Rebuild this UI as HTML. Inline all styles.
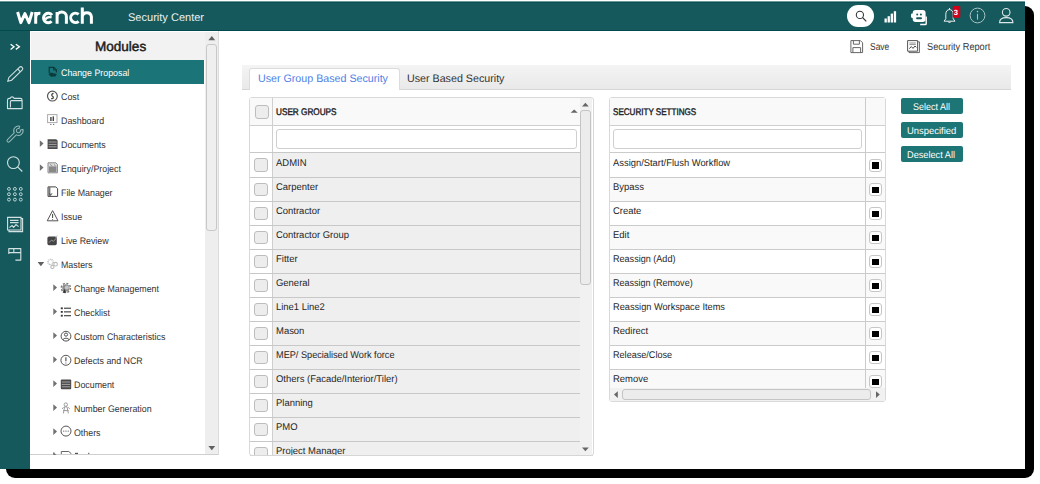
<!DOCTYPE html><html><head><meta charset='utf-8'><style>
*{box-sizing:border-box;margin:0;padding:0}
html,body{width:1040px;height:484px;overflow:hidden;background:#fff;font-family:"Liberation Sans",sans-serif;position:relative}
.a{position:absolute}
.t{position:absolute;white-space:nowrap;line-height:1;text-rendering:geometricPrecision}
svg{position:absolute;overflow:visible}
</style></head><body>
<div class="a" style="left:6px;top:6px;width:1028px;height:472px;background:#000;border-radius:9px"></div>
<div class="a" style="left:0px;top:0px;width:1025px;height:469px;background:#fff"></div>
<div class="a" style="left:0px;top:1px;width:1025px;height:30px;background:#16595d;border-top:1px solid #6f9a9c;border-bottom:1px solid #00494d"></div>
<div class="a" style="left:0px;top:2px;width:1025px;height:1px;background:#0a4e52"></div>
<svg style="left:0;top:0" width="1040" height="484" viewBox="0 0 1040 484"><path d="M17.6 12 L20.8 22.6 L24.9 13.6 L29 22.6 L32.2 12" fill="none" stroke="#fff" stroke-width="3" stroke-linejoin="round"/><path d="M35.7 23.8 V12 M35.7 17.6 C35.9 14.2 37.6 13 40.4 13.2" fill="none" stroke="#fff" stroke-width="3"/><path d="M52 15.2 A4.7 4.7 0 1 0 51.6 21.3" fill="none" stroke="#fff" stroke-width="3"/><path d="M45.2 19.6 C46.4 17.6 48.6 16.6 51.6 17.4" fill="none" stroke="#fff" stroke-width="2.4"/><path d="M57.1 23.8 V12 M57.1 16.6 A4.6 4.6 0 0 1 66.4 16.6 V23.8" fill="none" stroke="#fff" stroke-width="3"/><path d="M78.6 14.4 A4.7 4.7 0 1 0 78.6 21.3" fill="none" stroke="#fff" stroke-width="3"/><path d="M82.3 23.8 V7.6 M82.3 16.6 A4.6 4.6 0 0 1 91.4 16.6 V23.8" fill="none" stroke="#fff" stroke-width="3"/></svg>
<div class="t" id="T0" style="left:127.70px;top:13px;font-size:11.2px;color:#e8f0f0;font-weight:normal;transform:scaleX(0.9861);transform-origin:0 0;">Security Center</div>
<div class="a" style="left:847px;top:5px;width:27px;height:22px;background:#fff;border-radius:11px"></div>
<svg style="left:0;top:0" width="1040" height="484" viewBox="0 0 1040 484"><circle cx="859.9" cy="14.9" r="3.6" fill="none" stroke="#333" stroke-width="1.05"/><line x1="862.5" y1="17.5" x2="866.3" y2="21.3" stroke="#333" stroke-width="1.1"/><rect x="884.5" y="18.5" width="2.3" height="4" fill="#fff"/><rect x="887.6" y="16.2" width="2.3" height="6.3" fill="#fff"/><rect x="890.7" y="13.6" width="2.3" height="8.9" fill="#fff"/><rect x="893.8" y="11.2" width="2.3" height="11.3" fill="#fff"/><rect x="912.7" y="10" width="12.9" height="12.1" rx="3" fill="#fff"/><rect x="911" y="13.4" width="2.6" height="4.5" rx="1.1" fill="#fff"/><circle cx="917.2" cy="14.5" r="1" fill="#16595d"/><circle cx="920.9" cy="14.5" r="1" fill="#16595d"/><rect x="916.1" y="17.3" width="5.9" height="1.9" rx="0.9" fill="#16595d"/><path d="M920.2 24.5 H925.4 Q926.2 24.5 926.2 23.7 V16.4" fill="none" stroke="#fff" stroke-width="1.4"/><path d="M944 21.2 H955 L953.2 18.8 V14.2 C953.2 11.2 951.5 9.6 949.5 9.6 C947.5 9.6 945.8 11.2 945.8 14.2 V18.8 Z" fill="none" stroke="#e6eeee" stroke-width="1"/><path d="M948 21.5 A1.6 1.6 0 0 0 951 21.5" fill="none" stroke="#e6eeee" stroke-width="1"/><line x1="949.5" y1="8" x2="949.5" y2="9.6" stroke="#e6eeee" stroke-width="1"/><rect x="952.8" y="6" width="7.5" height="11.8" rx="1" fill="#d4001a"/><circle cx="977.5" cy="15.5" r="7.4" fill="none" stroke="#a9c2c3" stroke-width="1"/><circle cx="977.5" cy="11.6" r="0.8" fill="#a9c2c3"/><line x1="977.5" y1="13.8" x2="977.5" y2="19.6" stroke="#a9c2c3" stroke-width="1.1"/><circle cx="1006.2" cy="12.3" r="3.8" fill="none" stroke="#dce8e8" stroke-width="1.1"/><path d="M999.6 22.6 C999.6 19.2 1002.6 17.6 1006.2 17.6 C1009.8 17.6 1012.9 19.2 1012.9 22.6 Z" fill="none" stroke="#dce8e8" stroke-width="1.1"/></svg>
<div class="t" id="T1" style="left:953.70px;top:9px;font-size:7.6px;color:#fff;font-weight:bold;transform:scaleX(1.0000);transform-origin:0 0;">3</div>
<div class="a" style="left:0px;top:31px;width:30px;height:438px;background:#16595d"></div>
<svg style="left:0;top:0" width="1040" height="484" viewBox="0 0 1040 484"><path d="M10.6 44.2 L14 46.8 L10.6 49.4 M15.8 44.2 L19.4 46.8 L15.8 49.4" fill="none" stroke="#fff" stroke-width="1.3"/><g transform="translate(7.8,81.2) rotate(-44)"><path d="M0 0 L3.4 -1.95 H18 A1.95 1.95 0 0 1 18 1.95 H3.4 Z M15.6 -1.95 V1.95" fill="none" stroke="#d3e2e2" stroke-width="1.1"/></g><path d="M7.5 108.6 V100.2 Q7.5 98.4 9.2 98.4 H10.2 Q10.8 96.9 12.1 96.9 Q13.4 96.9 14 98.4 H20.4 Q22.1 98.4 22.1 100.2 V108.6 Z M10.4 107.4 V101.8 Q10.4 100.6 11.6 100.6 H21.6" fill="none" stroke="#d3e2e2" stroke-width="1.1" stroke-linejoin="round"/><g transform="translate(18.4,130.7) rotate(-45)"><path d="M-4.45 -1.5 H-14 A1.5 1.5 0 0 0 -14 1.5 H-4.45 A4.7 4.7 0 0 0 4.1 2.3 L1.9 1.05 A2.1 2.1 0 1 1 1.9 -1.05 L4.1 -2.3 A4.7 4.7 0 0 0 -4.45 -1.5 Z" fill="none" stroke="#93b8b7" stroke-width="1"/></g><circle cx="13.4" cy="162.6" r="5.9" fill="none" stroke="#d3e2e2" stroke-width="1.1" stroke-width="1.3"/><line x1="17.6" y1="166.8" x2="22.3" y2="171.5" fill="none" stroke="#d3e2e2" stroke-width="1.1" stroke-width="1.3"/><circle cx="8.95" cy="188.9" r="1.45" fill="none" stroke="#bdd3d3" stroke-width="1"/><circle cx="14.9" cy="188.9" r="1.45" fill="none" stroke="#bdd3d3" stroke-width="1"/><circle cx="20.8" cy="188.9" r="1.45" fill="none" stroke="#bdd3d3" stroke-width="1"/><circle cx="8.95" cy="194.2" r="1.45" fill="none" stroke="#bdd3d3" stroke-width="1"/><circle cx="14.9" cy="194.2" r="1.45" fill="none" stroke="#bdd3d3" stroke-width="1"/><circle cx="20.8" cy="194.2" r="1.45" fill="none" stroke="#bdd3d3" stroke-width="1"/><circle cx="8.95" cy="199.6" r="1.45" fill="none" stroke="#bdd3d3" stroke-width="1"/><circle cx="14.9" cy="199.6" r="1.45" fill="none" stroke="#bdd3d3" stroke-width="1"/><circle cx="20.8" cy="199.6" r="1.45" fill="none" stroke="#bdd3d3" stroke-width="1"/><path d="M7.6 217.4 H21 V230 H7.6 Z" fill="none" stroke="#d3e2e2" stroke-width="1.1"/><path d="M21 218.6 H22.6 V231.6 H9 V230" fill="none" stroke="#d3e2e2" stroke-width="1.1"/><path d="M10 220.4 H18.6 M10 222.6 H18.6" fill="none" stroke="#d3e2e2" stroke-width="1.1" stroke-width="0.9"/><path d="M9.4 227.6 L12 225.6 L13.6 227.4 L16 224.6 L18.6 226.6" fill="none" stroke="#d3e2e2" stroke-width="1.1" stroke-width="0.9"/><path d="M8.8 254 V248.6 H20.8 V260.1 H15.4 M8.8 252.6 H20.8 M13.8 248.6 V252.6" fill="none" stroke="#d3e2e2" stroke-width="1.1" stroke-linejoin="round"/></svg>
<div class="a" style="left:30px;top:31px;width:189px;height:424px;background:#fff;border-right:1px solid #dcdcdc;border-bottom:1px solid #cfcfcf"></div>
<div class="a" style="left:31px;top:32px;width:175px;height:28px;background:#f2f2f2"></div>
<div class="t" id="T2" style="left:94.80px;top:40px;font-size:13.5px;color:#1a1a1a;font-weight:normal;-webkit-text-stroke:0.45px #1a1a1a;transform:scaleX(1.0024);transform-origin:0 0;">Modules</div>
<div class="a" style="left:31px;top:60px;width:173px;height:24px;background:#1b7477"></div>
<div class="t" id="T3" style="left:60.80px;top:69px;font-size:9.5px;color:#fff;font-weight:normal;transform:scaleX(0.9300);transform-origin:0 0;">Change Proposal</div>
<div class="t" id="T4" style="left:60.80px;top:93px;font-size:9.5px;color:#333;font-weight:normal;transform:scaleX(0.9300);transform-origin:0 0;">Cost</div>
<div class="t" id="T5" style="left:60.80px;top:117px;font-size:9.5px;color:#333;font-weight:normal;transform:scaleX(0.9300);transform-origin:0 0;">Dashboard</div>
<div class="t" id="T6" style="left:60.80px;top:141px;font-size:9.5px;color:#333;font-weight:normal;transform:scaleX(0.9300);transform-origin:0 0;">Documents</div>
<div class="t" id="T7" style="left:60.80px;top:165px;font-size:9.5px;color:#333;font-weight:normal;transform:scaleX(0.9300);transform-origin:0 0;">Enquiry/Project</div>
<div class="t" id="T8" style="left:60.80px;top:189px;font-size:9.5px;color:#333;font-weight:normal;transform:scaleX(0.9300);transform-origin:0 0;">File Manager</div>
<div class="t" id="T9" style="left:60.80px;top:213px;font-size:9.5px;color:#333;font-weight:normal;transform:scaleX(0.9300);transform-origin:0 0;">Issue</div>
<div class="t" id="T10" style="left:60.80px;top:237px;font-size:9.5px;color:#333;font-weight:normal;transform:scaleX(0.9300);transform-origin:0 0;">Live Review</div>
<div class="t" id="T11" style="left:60.80px;top:261px;font-size:9.5px;color:#333;font-weight:normal;transform:scaleX(0.9300);transform-origin:0 0;">Masters</div>
<div class="t" id="T12" style="left:74.30px;top:285px;font-size:9.5px;color:#333;font-weight:normal;transform:scaleX(0.9300);transform-origin:0 0;">Change Management</div>
<div class="t" id="T13" style="left:74.30px;top:309px;font-size:9.5px;color:#333;font-weight:normal;transform:scaleX(0.9300);transform-origin:0 0;">Checklist</div>
<div class="t" id="T14" style="left:74.30px;top:333px;font-size:9.5px;color:#333;font-weight:normal;transform:scaleX(0.9300);transform-origin:0 0;">Custom Characteristics</div>
<div class="t" id="T15" style="left:74.30px;top:357px;font-size:9.5px;color:#333;font-weight:normal;transform:scaleX(0.9300);transform-origin:0 0;">Defects and NCR</div>
<div class="t" id="T16" style="left:74.30px;top:381px;font-size:9.5px;color:#333;font-weight:normal;transform:scaleX(0.9300);transform-origin:0 0;">Document</div>
<div class="t" id="T17" style="left:74.30px;top:405px;font-size:9.5px;color:#333;font-weight:normal;transform:scaleX(0.9300);transform-origin:0 0;">Number Generation</div>
<div class="t" id="T18" style="left:74.30px;top:429px;font-size:9.5px;color:#333;font-weight:normal;transform:scaleX(0.9300);transform-origin:0 0;">Others</div>
<svg style="left:0;top:0" width="1040" height="484" viewBox="0 0 1040 484"><path d="M39.8 140.29999999999998 L43.5 143.6 L39.8 146.9 Z" fill="#707070"/><path d="M39.8 164.29999999999998 L43.5 167.6 L39.8 170.9 Z" fill="#707070"/><path d="M37.6 262.1 H44.2 L40.9 266.2 Z" fill="#606060"/><path d="M53.3 284.3 L57.0 287.6 L53.3 290.90000000000003 Z" fill="#707070"/><path d="M53.3 308.3 L57.0 311.6 L53.3 314.90000000000003 Z" fill="#707070"/><path d="M53.3 332.3 L57.0 335.6 L53.3 338.90000000000003 Z" fill="#707070"/><path d="M53.3 356.3 L57.0 359.6 L53.3 362.90000000000003 Z" fill="#707070"/><path d="M53.3 380.3 L57.0 383.6 L53.3 386.90000000000003 Z" fill="#707070"/><path d="M53.3 404.3 L57.0 407.6 L53.3 410.90000000000003 Z" fill="#707070"/><path d="M53.3 428.3 L57.0 431.6 L53.3 434.90000000000003 Z" fill="#707070"/><path d="M53.3 452.3 L57.0 455.6 L53.3 458.90000000000003 Z" fill="#707070"/></svg>
<svg style="left:0;top:0" width="1040" height="484" viewBox="0 0 1040 484"><path d="M49.2 73 V67.3 H53.8 L56.4 69.9 V72.6" fill="none" stroke="#0c3b3d" stroke-width="1.2"/><path d="M53.6 67.3 V70 H56.4" fill="none" stroke="#0c3b3d" stroke-width="1"/><path d="M48.4 74.2 L50.8 72.4 L53.6 73.2 L56.8 74 L55.4 76.6 L51 76.8 Z" fill="#0c3b3d"/><circle cx="52.4" cy="96.1" r="4.9" fill="none" stroke="#555" stroke-width="1.2"/><path d="M53.6 93.4 C52.2 93.4 51.4 94.4 51.9 95.5 C52.3 96.3 53.5 96.6 53.3 97.8 C53.1 98.7 52 98.9 51.1 98.5" fill="none" stroke="#444" stroke-width="1.3"/><rect x="47.6" y="114.6" width="9.4" height="8" fill="#fff" stroke="#aaa" stroke-width="1"/><rect x="50.2" y="117" width="1.4" height="4" fill="#444"/><rect x="52.6" y="116.4" width="1.4" height="4.6" fill="#444"/><circle cx="50.8" cy="124.4" r="0.7" fill="#777"/><circle cx="53.6" cy="124.4" r="0.7" fill="#777"/><path d="M47.6 139.2 H56.2 L57.6 140.6 V149 H47.6 Z" fill="#4a4a4a"/><path d="M48.6 142 H56.6 M48.6 144.4 H56.6 M48.6 146.8 H56.6" stroke="#bbb" stroke-width="0.8"/><path d="M48 162.8 H55.8 L57.4 164.4 V172.8 H48 Z" fill="#ddd" stroke="#888" stroke-width="1"/><rect x="49" y="166.4" width="7.4" height="5.6" fill="#888"/><path d="M50 164.4 L52.4 166 M54 164.6 L55.6 165.8" stroke="#777" stroke-width="0.8"/><path d="M48 186.9 H55.8 L57.6 188.7 V196.4 H48 Z" fill="none" stroke="#444" stroke-width="1"/><path d="M48.4 187 H50.4 V196.2 H48.4 Z" fill="#777"/><path d="M49.6 193.4 L50.6 195.4 L52 193.2" fill="none" stroke="#333" stroke-width="0.8"/><path d="M52.6 210.6 L58 220.8 H47.2 Z" fill="none" stroke="#555" stroke-width="1" stroke-linejoin="round"/><path d="M52.6 214 V218" stroke="#444" stroke-width="1"/><circle cx="52.6" cy="219.4" r="0.5" fill="#444"/><rect x="47.4" y="236.4" width="9.4" height="8.8" rx="1.6" fill="#444"/><path d="M49 242.6 L51.6 240 L53.4 241.4 L56 238.6 M55.4 238.4 L57.4 235.4" fill="none" stroke="#aaa" stroke-width="0.8"/><circle cx="50.6" cy="262" r="2.6" fill="none" stroke="#bbb" stroke-width="1.4" stroke-dasharray="1 0.6"/><circle cx="55.6" cy="264.2" r="1.8" fill="none" stroke="#bbb" stroke-width="1.1"/><circle cx="52.4" cy="267" r="1.6" fill="none" stroke="#bbb" stroke-width="1.1"/><circle cx="65.9" cy="287.9" r="4.6" fill="none" stroke="#777" stroke-width="1.4" stroke-dasharray="2 1.6"/><circle cx="65.9" cy="287.9" r="3.7" fill="#8c8c8c"/><circle cx="66.8" cy="287.4" r="2" fill="#c4c4c4"/><path d="M62.6 292.8 L64.4 289 L66.4 292.8 Z" fill="#333"/><rect x="60.8" y="307.4" width="2" height="1.8" fill="#333"/><rect x="64" y="307.59999999999997" width="7" height="1.3" fill="#555"/><rect x="60.8" y="311.0" width="2" height="1.8" fill="#333"/><rect x="64" y="311.2" width="7" height="1.3" fill="#555"/><rect x="60.8" y="314.8" width="2" height="1.8" fill="#333"/><rect x="64" y="315.0" width="7" height="1.3" fill="#555"/><circle cx="66" cy="336.2" r="4.9" fill="none" stroke="#555" stroke-width="1"/><circle cx="66" cy="334.6" r="1.6" fill="none" stroke="#555" stroke-width="1" stroke-width="0.9"/><path d="M63 340 C63 337.6 69 337.6 69 340" fill="none" stroke="#555" stroke-width="1" stroke-width="0.9"/><circle cx="65.9" cy="360.3" r="5" fill="none" stroke="#555" stroke-width="1" stroke-width="1.1"/><path d="M65.9 357.2 V361.2" stroke="#444" stroke-width="1.1"/><circle cx="65.9" cy="363" r="0.6" fill="#444"/><rect x="60.8" y="379.4" width="10.4" height="9.8" rx="1" fill="#4a4a4a"/><path d="M61.8 382 H70.2 M61.8 384.4 H70.2 M61.8 386.8 H70.2" stroke="#bbb" stroke-width="0.8"/><circle cx="65.8" cy="404.6" r="1.7" fill="none" stroke="#999" stroke-width="1"/><path d="M63.4 413.4 L64.6 406.8 H67 L68.4 413.4 M62 408.8 L63.6 407.4 M69.8 408.8 L68.2 407.4 M63.2 410.6 H68.6" fill="none" stroke="#999" stroke-width="1"/><circle cx="66" cy="431.1" r="5" fill="none" stroke="#555" stroke-width="1" stroke-width="1.1"/><circle cx="63.8" cy="431.1" r="0.6" fill="#444"/><circle cx="66" cy="431.1" r="0.6" fill="#444"/><circle cx="68.2" cy="431.1" r="0.6" fill="#444"/><path d="M61.3 454 V451.5 H68.8 L71 453.4 V454" fill="none" stroke="#666" stroke-width="1"/><rect x="53.2" y="452.6" width="1.4" height="1.4" fill="#777"/><rect x="75" y="452.8" width="3" height="1.2" fill="#555"/><rect x="88" y="452.8" width="1.4" height="1.2" fill="#777"/></svg>
<div class="a" style="left:205px;top:32px;width:13px;height:422px;background:#eeeeee"></div>
<div class="a" style="left:206px;top:44px;width:11px;height:187px;background:#efefef;border:1px solid #c8c8c8;border-radius:3px"></div>
<svg style="left:0;top:0" width="1040" height="484" viewBox="0 0 1040 484"><path d="M208.4 40.2 L211.8 36 L215.2 40.2 Z" fill="#606060"/><path d="M208.4 446 L211.8 450.2 L215.2 446 Z" fill="#606060"/></svg>
<div class="a" style="left:31px;top:455px;width:188px;height:14px;background:#fff"></div>
<svg style="left:0;top:0" width="1040" height="484" viewBox="0 0 1040 484"><path d="M850.9 40.6 H860.4 L862.6 42.8 V52.6 H850.9 Z" fill="none" stroke="#666" stroke-width="1"/><path d="M853.4 40.6 V44.2 H859.4 V40.6 M852.9 52.6 V47.6 H860.6 V52.6" fill="none" stroke="#666" stroke-width="1"/><path d="M907.6 40.6 H917.6 V51.2 H907.6 Z" fill="none" stroke="#555" stroke-width="1"/><path d="M917.6 41.8 H919.4 V52.6 H909 V51.2" fill="none" stroke="#666" stroke-width="1"/><path d="M909.4 43 H915.8 M909.4 44.6 H915.8" stroke="#777" stroke-width="0.8"/><path d="M909.2 48.6 L911.4 46.6 L913 48.4 L915 46 L916.4 47.4" fill="none" stroke="#333" stroke-width="0.9"/></svg>
<div class="t" id="T19" style="left:870.00px;top:43px;font-size:10.2px;color:#333;font-weight:normal;transform:scaleX(0.8279);transform-origin:0 0;">Save</div>
<div class="t" id="T20" style="left:927.00px;top:43px;font-size:10.2px;color:#333;font-weight:normal;transform:scaleX(0.9023);transform-origin:0 0;">Security Report</div>
<div class="a" style="left:242px;top:65px;width:769px;height:25px;background:linear-gradient(#f4f4f4,#e9e9e9);border-bottom:1px solid #d6d6d6"></div>
<div class="a" style="left:249px;top:68px;width:151px;height:22px;background:#fff;border:1px solid #dcdcdc;border-bottom:none;border-radius:3px 3px 0 0"></div>
<div class="t" id="T21" style="left:258.10px;top:74px;font-size:10.9px;color:#4f80e6;font-weight:normal;transform:scaleX(0.9804);transform-origin:0 0;">User Group Based Security</div>
<div class="t" id="T22" style="left:407.30px;top:74px;font-size:10.9px;color:#333;font-weight:normal;transform:scaleX(0.9818);transform-origin:0 0;">User Based Security</div>
<div class="a" style="left:249px;top:97px;width:345px;height:359px;background:#fff;border:1px solid #d9d9d9;border-radius:3px"></div>
<div class="a" style="left:250px;top:98px;width:330px;height:27px;background:#f9f9f9"></div>
<div class="a" style="left:250px;top:125px;width:330px;height:1px;background:#cfcfcf"></div>
<div class="a" style="left:250px;top:152px;width:330px;height:1px;background:#cfcfcf"></div>
<div class="a" style="left:272px;top:98px;width:1px;height:357px;background:#cfcfcf"></div>
<div class="a" style="left:276px;top:129px;width:301px;height:20px;background:#fff;border:1px solid #cfcfcf;border-radius:3px"></div>
<div class="a" style="left:254.5px;top:104.5px;width:14px;height:14px;background:#ededed;border:1px solid #bdbdbd;border-radius:3px"></div>
<div class="t" id="T23" style="left:275.80px;top:108px;font-size:9.6px;color:#222;font-weight:normal;-webkit-text-stroke:0.4px #222;transform:scaleX(0.8539);transform-origin:0 0;">USER GROUPS</div>
<svg style="left:0;top:0" width="1040" height="484" viewBox="0 0 1040 484"><path d="M570.6 112.8 L574.2 109.4 L577.8 112.8 Z" fill="#666"/></svg>
<div class="a" style="left:273px;top:153px;width:307px;height:302px;background:#efefef"></div>
<div class="a" style="left:250px;top:152px;width:330px;height:1px;background:#c8c8c8"></div>
<div class="a" style="left:254.2px;top:158.0px;width:13.5px;height:13.5px;background:#ededed;border:1px solid #bdbdbd;border-radius:3px"></div>
<div class="t" id="T24" style="left:275.50px;top:159px;font-size:9.8px;color:#262626;font-weight:normal;transform:scaleX(0.9650);transform-origin:0 0;">ADMIN</div>
<div class="a" style="left:250px;top:177px;width:330px;height:1px;background:#c8c8c8"></div>
<div class="a" style="left:254.2px;top:182.5px;width:13.5px;height:13.5px;background:#ededed;border:1px solid #bdbdbd;border-radius:3px"></div>
<div class="t" id="T25" style="left:275.50px;top:183px;font-size:9.8px;color:#262626;font-weight:normal;transform:scaleX(0.9650);transform-origin:0 0;">Carpenter</div>
<div class="a" style="left:250px;top:201px;width:330px;height:1px;background:#c8c8c8"></div>
<div class="a" style="left:254.2px;top:206.5px;width:13.5px;height:13.5px;background:#ededed;border:1px solid #bdbdbd;border-radius:3px"></div>
<div class="t" id="T26" style="left:275.50px;top:207px;font-size:9.8px;color:#262626;font-weight:normal;transform:scaleX(0.9650);transform-origin:0 0;">Contractor</div>
<div class="a" style="left:250px;top:225px;width:330px;height:1px;background:#c8c8c8"></div>
<div class="a" style="left:254.2px;top:230.5px;width:13.5px;height:13.5px;background:#ededed;border:1px solid #bdbdbd;border-radius:3px"></div>
<div class="t" id="T27" style="left:275.50px;top:231px;font-size:9.8px;color:#262626;font-weight:normal;transform:scaleX(0.9650);transform-origin:0 0;">Contractor Group</div>
<div class="a" style="left:250px;top:249px;width:330px;height:1px;background:#c8c8c8"></div>
<div class="a" style="left:254.2px;top:254.5px;width:13.5px;height:13.5px;background:#ededed;border:1px solid #bdbdbd;border-radius:3px"></div>
<div class="t" id="T28" style="left:275.50px;top:255px;font-size:9.8px;color:#262626;font-weight:normal;transform:scaleX(0.9650);transform-origin:0 0;">Fitter</div>
<div class="a" style="left:250px;top:273px;width:330px;height:1px;background:#c8c8c8"></div>
<div class="a" style="left:254.2px;top:278.5px;width:13.5px;height:13.5px;background:#ededed;border:1px solid #bdbdbd;border-radius:3px"></div>
<div class="t" id="T29" style="left:275.50px;top:279px;font-size:9.8px;color:#262626;font-weight:normal;transform:scaleX(0.9650);transform-origin:0 0;">General</div>
<div class="a" style="left:250px;top:297px;width:330px;height:1px;background:#c8c8c8"></div>
<div class="a" style="left:254.2px;top:302.5px;width:13.5px;height:13.5px;background:#ededed;border:1px solid #bdbdbd;border-radius:3px"></div>
<div class="t" id="T30" style="left:275.50px;top:303px;font-size:9.8px;color:#262626;font-weight:normal;transform:scaleX(0.9639);transform-origin:0 0;">Line1 Line2</div>
<div class="a" style="left:250px;top:321px;width:330px;height:1px;background:#c8c8c8"></div>
<div class="a" style="left:254.2px;top:326.5px;width:13.5px;height:13.5px;background:#ededed;border:1px solid #bdbdbd;border-radius:3px"></div>
<div class="t" id="T31" style="left:275.50px;top:327px;font-size:9.8px;color:#262626;font-weight:normal;transform:scaleX(0.9650);transform-origin:0 0;">Mason</div>
<div class="a" style="left:250px;top:345px;width:330px;height:1px;background:#c8c8c8"></div>
<div class="a" style="left:254.2px;top:350.5px;width:13.5px;height:13.5px;background:#ededed;border:1px solid #bdbdbd;border-radius:3px"></div>
<div class="t" id="T32" style="left:275.50px;top:351px;font-size:9.8px;color:#262626;font-weight:normal;transform:scaleX(0.9353);transform-origin:0 0;">MEP/ Specialised Work force</div>
<div class="a" style="left:250px;top:369px;width:330px;height:1px;background:#c8c8c8"></div>
<div class="a" style="left:254.2px;top:374.5px;width:13.5px;height:13.5px;background:#ededed;border:1px solid #bdbdbd;border-radius:3px"></div>
<div class="t" id="T33" style="left:275.50px;top:375px;font-size:9.8px;color:#262626;font-weight:normal;transform:scaleX(0.9650);transform-origin:0 0;">Others (Facade/Interior/Tiler)</div>
<div class="a" style="left:250px;top:393px;width:330px;height:1px;background:#c8c8c8"></div>
<div class="a" style="left:254.2px;top:398.5px;width:13.5px;height:13.5px;background:#ededed;border:1px solid #bdbdbd;border-radius:3px"></div>
<div class="t" id="T34" style="left:275.50px;top:399px;font-size:9.8px;color:#262626;font-weight:normal;transform:scaleX(0.9650);transform-origin:0 0;">Planning</div>
<div class="a" style="left:250px;top:417px;width:330px;height:1px;background:#c8c8c8"></div>
<div class="a" style="left:254.2px;top:422.5px;width:13.5px;height:13.5px;background:#ededed;border:1px solid #bdbdbd;border-radius:3px"></div>
<div class="t" id="T35" style="left:275.50px;top:423px;font-size:9.8px;color:#262626;font-weight:normal;transform:scaleX(0.9650);transform-origin:0 0;">PMO</div>
<div class="a" style="left:250px;top:441px;width:330px;height:1px;background:#c8c8c8"></div>
<div class="a" style="left:254.2px;top:446.5px;width:13.5px;height:13.5px;background:#ededed;border:1px solid #bdbdbd;border-radius:3px"></div>
<div class="t" id="T36" style="left:275.50px;top:447px;font-size:9.8px;color:#262626;font-weight:normal;transform:scaleX(0.9650);transform-origin:0 0;">Project Manager</div>
<div class="a" style="left:580px;top:98px;width:12px;height:357px;background:#f1f1f1"></div>
<div class="a" style="left:580px;top:110px;width:11px;height:175px;background:#ececec;border:1px solid #c4c4c4;border-radius:3px"></div>
<svg style="left:0;top:0" width="1040" height="484" viewBox="0 0 1040 484"><path d="M582 106.4 L585.4 102.8 L588.8 106.4 Z" fill="#666"/><path d="M582 447.6 L585.4 451.2 L588.8 447.6 Z" fill="#666"/></svg>
<div class="a" style="left:249px;top:455px;width:345px;height:14px;background:#fff"></div>
<div class="a" style="left:250px;top:455px;width:343px;height:1px;background:#d6d6d6"></div>
<div class="a" style="left:609px;top:97px;width:277px;height:305px;background:#fff;border:1px solid #d9d9d9;border-radius:3px"></div>
<div class="a" style="left:610px;top:98px;width:275px;height:27px;background:#f9f9f9"></div>
<div class="a" style="left:610px;top:125px;width:275px;height:1px;background:#cfcfcf"></div>
<div class="a" style="left:610px;top:152px;width:275px;height:1px;background:#cfcfcf"></div>
<div class="a" style="left:865px;top:98px;width:1px;height:290px;background:#cfcfcf"></div>
<div class="a" style="left:613px;top:129px;width:249px;height:20px;background:#fff;border:1px solid #cfcfcf;border-radius:3px"></div>
<div class="t" id="T37" style="left:613.00px;top:108px;font-size:9.6px;color:#222;font-weight:normal;-webkit-text-stroke:0.4px #222;transform:scaleX(0.8405);transform-origin:0 0;">SECURITY SETTINGS</div>
<div class="a" style="left:610px;top:153px;width:275px;height:24px;background:#ffffff"></div>
<div class="a" style="left:610px;top:152px;width:275px;height:1px;background:#cbcbcb"></div>
<div class="a" style="left:869px;top:158.5px;width:13px;height:13.2px;background:#fff;border:1.5px solid #c6c6c6;border-radius:3px"></div>
<div class="a" style="left:872px;top:162.1px;width:6.8px;height:6.6px;background:#000"></div>
<div class="t" id="T38" style="left:613.40px;top:159px;font-size:9.8px;color:#262626;font-weight:normal;transform:scaleX(0.9575);transform-origin:0 0;">Assign/Start/Flush Workflow</div>
<div class="a" style="left:610px;top:178px;width:275px;height:23px;background:#f9f9f9"></div>
<div class="a" style="left:610px;top:177px;width:275px;height:1px;background:#cbcbcb"></div>
<div class="a" style="left:869px;top:183.0px;width:13px;height:13.2px;background:#fff;border:1.5px solid #c6c6c6;border-radius:3px"></div>
<div class="a" style="left:872px;top:186.6px;width:6.8px;height:6.6px;background:#000"></div>
<div class="t" id="T39" style="left:613.40px;top:183px;font-size:9.8px;color:#262626;font-weight:normal;transform:scaleX(0.9650);transform-origin:0 0;">Bypass</div>
<div class="a" style="left:610px;top:202px;width:275px;height:23px;background:#ffffff"></div>
<div class="a" style="left:610px;top:201px;width:275px;height:1px;background:#cbcbcb"></div>
<div class="a" style="left:869px;top:207.0px;width:13px;height:13.2px;background:#fff;border:1.5px solid #c6c6c6;border-radius:3px"></div>
<div class="a" style="left:872px;top:210.6px;width:6.8px;height:6.6px;background:#000"></div>
<div class="t" id="T40" style="left:613.40px;top:207px;font-size:9.8px;color:#262626;font-weight:normal;transform:scaleX(0.9650);transform-origin:0 0;">Create</div>
<div class="a" style="left:610px;top:226px;width:275px;height:23px;background:#f9f9f9"></div>
<div class="a" style="left:610px;top:225px;width:275px;height:1px;background:#cbcbcb"></div>
<div class="a" style="left:869px;top:231.0px;width:13px;height:13.2px;background:#fff;border:1.5px solid #c6c6c6;border-radius:3px"></div>
<div class="a" style="left:872px;top:234.6px;width:6.8px;height:6.6px;background:#000"></div>
<div class="t" id="T41" style="left:613.40px;top:231px;font-size:9.8px;color:#262626;font-weight:normal;transform:scaleX(0.9650);transform-origin:0 0;">Edit</div>
<div class="a" style="left:610px;top:250px;width:275px;height:23px;background:#ffffff"></div>
<div class="a" style="left:610px;top:249px;width:275px;height:1px;background:#cbcbcb"></div>
<div class="a" style="left:869px;top:255.0px;width:13px;height:13.2px;background:#fff;border:1.5px solid #c6c6c6;border-radius:3px"></div>
<div class="a" style="left:872px;top:258.6px;width:6.8px;height:6.6px;background:#000"></div>
<div class="t" id="T42" style="left:613.40px;top:255px;font-size:9.8px;color:#262626;font-weight:normal;transform:scaleX(0.9248);transform-origin:0 0;">Reassign (Add)</div>
<div class="a" style="left:610px;top:274px;width:275px;height:23px;background:#f9f9f9"></div>
<div class="a" style="left:610px;top:273px;width:275px;height:1px;background:#cbcbcb"></div>
<div class="a" style="left:869px;top:279.0px;width:13px;height:13.2px;background:#fff;border:1.5px solid #c6c6c6;border-radius:3px"></div>
<div class="a" style="left:872px;top:282.6px;width:6.8px;height:6.6px;background:#000"></div>
<div class="t" id="T43" style="left:613.40px;top:279px;font-size:9.8px;color:#262626;font-weight:normal;transform:scaleX(0.9200);transform-origin:0 0;">Reassign (Remove)</div>
<div class="a" style="left:610px;top:298px;width:275px;height:23px;background:#ffffff"></div>
<div class="a" style="left:610px;top:297px;width:275px;height:1px;background:#cbcbcb"></div>
<div class="a" style="left:869px;top:303.0px;width:13px;height:13.2px;background:#fff;border:1.5px solid #c6c6c6;border-radius:3px"></div>
<div class="a" style="left:872px;top:306.6px;width:6.8px;height:6.6px;background:#000"></div>
<div class="t" id="T44" style="left:613.40px;top:303px;font-size:9.8px;color:#262626;font-weight:normal;transform:scaleX(0.9399);transform-origin:0 0;">Reassign Workspace Items</div>
<div class="a" style="left:610px;top:322px;width:275px;height:23px;background:#f9f9f9"></div>
<div class="a" style="left:610px;top:321px;width:275px;height:1px;background:#cbcbcb"></div>
<div class="a" style="left:869px;top:327.0px;width:13px;height:13.2px;background:#fff;border:1.5px solid #c6c6c6;border-radius:3px"></div>
<div class="a" style="left:872px;top:330.6px;width:6.8px;height:6.6px;background:#000"></div>
<div class="t" id="T45" style="left:613.40px;top:327px;font-size:9.8px;color:#262626;font-weight:normal;transform:scaleX(0.9650);transform-origin:0 0;">Redirect</div>
<div class="a" style="left:610px;top:346px;width:275px;height:23px;background:#ffffff"></div>
<div class="a" style="left:610px;top:345px;width:275px;height:1px;background:#cbcbcb"></div>
<div class="a" style="left:869px;top:351.0px;width:13px;height:13.2px;background:#fff;border:1.5px solid #c6c6c6;border-radius:3px"></div>
<div class="a" style="left:872px;top:354.6px;width:6.8px;height:6.6px;background:#000"></div>
<div class="t" id="T46" style="left:613.40px;top:351px;font-size:9.8px;color:#262626;font-weight:normal;transform:scaleX(0.9274);transform-origin:0 0;">Release/Close</div>
<div class="a" style="left:610px;top:370px;width:275px;height:18px;background:#f9f9f9"></div>
<div class="a" style="left:610px;top:369px;width:275px;height:1px;background:#cbcbcb"></div>
<div class="a" style="left:869px;top:375.0px;width:13px;height:13.2px;background:#fff;border:1.5px solid #c6c6c6;border-radius:3px"></div>
<div class="a" style="left:872px;top:378.6px;width:6.8px;height:6.6px;background:#000"></div>
<div class="t" id="T47" style="left:613.40px;top:375px;font-size:9.8px;color:#262626;font-weight:normal;transform:scaleX(0.9650);transform-origin:0 0;">Remove</div>
<div class="a" style="left:865px;top:98px;width:1px;height:290px;background:#cbcbcb"></div>
<div class="a" style="left:610px;top:388px;width:275px;height:13px;background:#f1f1f1"></div>
<div class="a" style="left:622px;top:389px;width:249px;height:11px;background:#ececec;border:1px solid #c4c4c4;border-radius:3px"></div>
<svg style="left:0;top:0" width="1040" height="484" viewBox="0 0 1040 484"><path d="M617.8 391.2 L614 394.6 L617.8 398 Z" fill="#666"/><path d="M876 391.2 L879.8 394.6 L876 398 Z" fill="#666"/></svg>
<div class="a" style="left:901px;top:97.5px;width:62px;height:16px;background:#1e7575;border-radius:2px"></div>
<div class="t" id="T48" style="left:912.80px;top:103px;font-size:9.8px;color:#fff;font-weight:normal;transform:scaleX(0.9149);transform-origin:0 0;">Select All</div>
<div class="a" style="left:901px;top:122px;width:62px;height:16px;background:#1e7575;border-radius:2px"></div>
<div class="t" id="T49" style="left:907.00px;top:127px;font-size:9.8px;color:#fff;font-weight:normal;transform:scaleX(0.9637);transform-origin:0 0;">Unspecified</div>
<div class="a" style="left:901px;top:146px;width:62px;height:16px;background:#1e7575;border-radius:2px"></div>
<div class="t" id="T50" style="left:907.40px;top:151px;font-size:9.8px;color:#fff;font-weight:normal;transform:scaleX(0.9370);transform-origin:0 0;">Deselect All</div>
</body></html>
